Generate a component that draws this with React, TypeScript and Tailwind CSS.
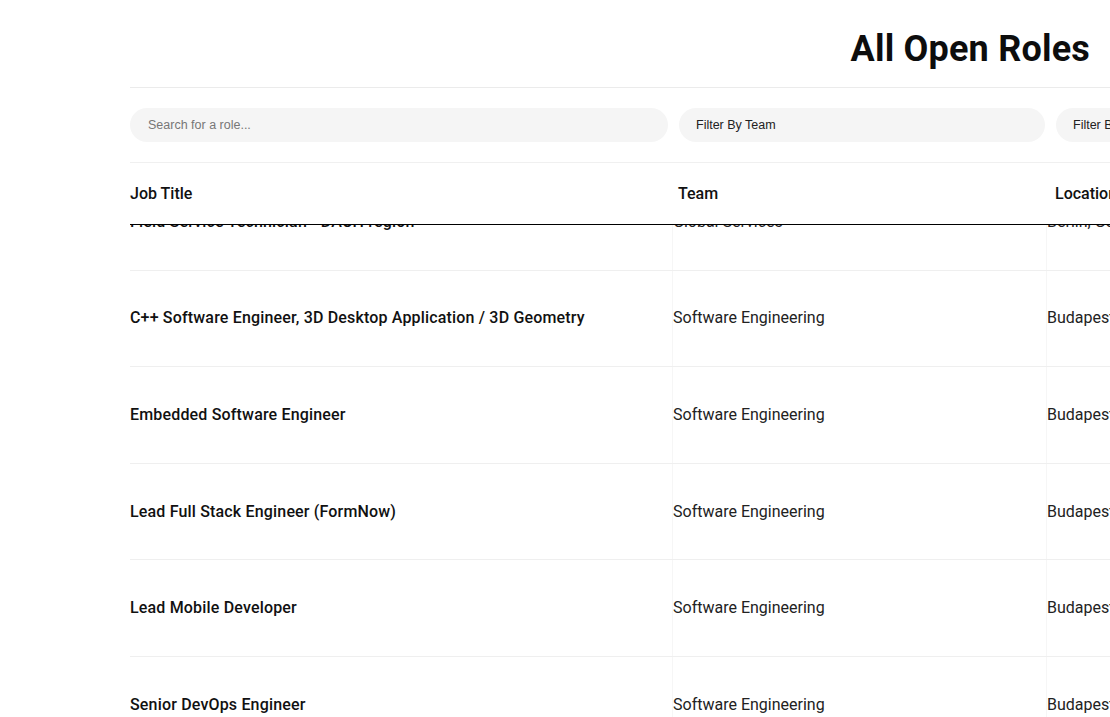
import React from "react";

const rows = [
  { title: "Field Service Technician - DACH region", team: "Global Services", loc: "Berlin, Germany" },
  { title: "C++ Software Engineer, 3D Desktop Application / 3D Geometry", team: "Software Engineering", loc: "Budapest, Hungary" },
  { title: "Embedded Software Engineer", team: "Software Engineering", loc: "Budapest, Hungary" },
  { title: "Lead Full Stack Engineer (FormNow)", team: "Software Engineering", loc: "Budapest, Hungary" },
  { title: "Lead Mobile Developer", team: "Software Engineering", loc: "Budapest, Hungary" },
  { title: "Senior DevOps Engineer", team: "Software Engineering", loc: "Budapest, Hungary" },
];

export default function App() {
  return (
    <div className="w-[1110px] h-[717px] overflow-hidden bg-white font-['Roboto',sans-serif] text-[#111]">
      <div className="ml-[130px] w-[1300px]">
        <div className="relative z-10 bg-white">
          <div className="h-[88px] border-b border-[#ebebeb]">
            <div className="w-[960px] flex justify-end pt-[27px]">
              <h1 className="text-[36px] leading-[44px] font-bold tracking-[0.2px] text-[#0d0d0d]">All Open Roles</h1>
            </div>
          </div>
          <div className="flex gap-[11px] py-[20px] border-b border-[#f0f0f0] font-['Liberation_Sans',Arial,sans-serif] text-[12.5px]">
            <div className="w-[538px] h-[34px] rounded-full bg-[#f5f5f5] flex items-center pl-[18px] text-[#777]">Search for a role...</div>
            <div className="w-[366px] h-[34px] rounded-full bg-[#f5f5f5] flex items-center pl-[17px] text-[#222]">Filter By Team</div>
            <div className="w-[366px] h-[34px] rounded-full bg-[#f5f5f5] flex items-center pl-[17px] text-[#222]">Filter By Location</div>
          </div>
          <div className="grid grid-cols-[548px_377px_1fr] h-[62px] items-center border-b border-black text-[16px] font-medium text-[#111]">
            <div>Job Title</div>
            <div>Team</div>
            <div>Location</div>
          </div>
        </div>
        <div className="-mt-[51px]">
          {rows.map((r, i) => (
            <div key={i} className="grid grid-cols-[543px_374px_1fr] h-[96.6px] border-b border-[#efefef] text-[16px]">
              <div className="flex items-center font-medium tracking-[0.17px] text-[#111]">{r.title}</div>
              <div className="flex items-center border-l border-[#f6f6f6] -ml-px text-[#222]">{r.team}</div>
              <div className="flex items-center border-l border-[#f6f6f6] -ml-px text-[#222]">{r.loc}</div>
            </div>
          ))}
        </div>
      </div>
    </div>
  );
}
